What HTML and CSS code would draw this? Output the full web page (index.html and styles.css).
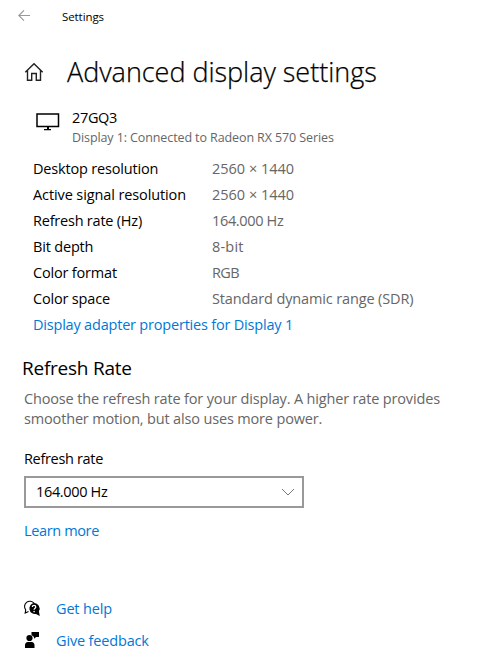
FILE: index.html
```html
<!DOCTYPE html>
<html lang="en">
<head>
<meta charset="utf-8">
<title>Settings</title>
<link rel="stylesheet" href="styles.css">
</head>
<body>
<header class="titlebar">
  <svg class="back" width="14" height="12" viewBox="0 0 14 12" fill="none" stroke="#999" stroke-width="1.100"><path d="M12 5.500H.8M6 .3.8 5.500 6 10.700"/></svg>
  <span>Settings</span>
</header>
<main>
  <div class="heading">
    <svg width="20" height="20" viewBox="0 0 20 20" fill="none" stroke="#222" stroke-width="1.4"><path d="M1.3 10.2 10 1.700l8.700 8.500M3.500 8.500v9.800h4.200v-6.800h4.600v6.800h4.200V8.500"/></svg>
    <h1>Advanced display settings</h1>
  </div>
  <section class="display">
    <svg width="24" height="18" viewBox="0 0 24 18"><path fill="none" stroke="#000" stroke-width="1.500" d="M1 1h21.500v12.500H1z"/><path d="M11 14h2v2h2v1.300H8V16h3z"/></svg>
    <div>
      <div class="name">27GQ3</div>
      <div class="connection">Display 1: Connected to Radeon RX 570 Series</div>
    </div>
  </section>
  <dl class="info">
    <dt>Desktop resolution</dt><dd class="res">2560 × 1440</dd>
    <dt class="signal">Active signal resolution</dt><dd class="res">2560 × 1440</dd>
    <dt class="rate">Refresh rate (Hz)</dt><dd class="hz">164.000 Hz</dd>
    <dt>Bit depth</dt><dd class="bits">8-bit</dd>
    <dt>Color format</dt><dd class="rgb">RGB</dd>
    <dt>Color space</dt><dd>Standard dynamic range (SDR)</dd>
  </dl>
  <a class="adapter">Display adapter properties for Display 1</a>
  <section class="refresh">
    <h2>Refresh Rate</h2>
    <p>Choose the refresh rate for your display. A higher rate provides<br>smoother motion, but also uses more power.</p>
    <div class="label">Refresh rate</div>
    <div class="select">
      <span class="hz">164.000 Hz</span>
      <svg width="14" height="8" viewBox="0 0 14 8" fill="none" stroke="#777"><path d="m1 1 6 6 6-6"/></svg>
    </div>
    <a class="learn">Learn more</a>
  </section>
  <nav class="support">
    <a><svg width="18" height="18" viewBox="0 0 18 18"><path d="M5.500 11.500 2.200 13l.5-3.200A5.200 5.200 0 1 1 11 3.200" fill="none" stroke="#000" stroke-width="1.100"/><path d="M11 3a5.500 5.500 0 0 1 4.900 8.200l.9 4.900-3.900-2.200A5.500 5.500 0 1 1 11 3z"/><path d="M9.300 7.100c0-2.200 3.500-2.200 3.500 0 0 1.300-1.700 1.200-1.700 2.700" fill="none" stroke="#fff" stroke-width="1.200"/><circle cx="11.100" cy="11.600" r=".8" fill="#fff"/></svg><span>Get help</span></a>
    <a><svg class="person" width="18" height="18" viewBox="0 0 18 18"><circle cx="6.500" cy="7" r="3.100"/><path d="M2 17v-2.500Q2 11 5 11h3.500q3 0 3 3.500V17zM8.500 1H16v5h-2.800l-2.200 1.800V6L8.500 4z"/></svg><span>Give feedback</span></a>
  </nav>
</main>
</body>
</html>
```
FILE: styles.css
```css
* { box-sizing: border-box; }
body {
  margin: 0;
  background: #fff;
  color: #000;
  font: 14.5px/20px "Open Sans", "Noto Sans", sans-serif;
  letter-spacing: -0.16px;
  white-space: nowrap;
}
svg { display: block; flex: none; }
h1, h2, p, dl, dd { margin: 0; font-weight: 400; }
a { color: #0078d7; }

.titlebar { display: flex; align-items: center; height: 32px; padding-left: 18px; font-size: 11.5px; letter-spacing: -0.08px; }
.titlebar span { margin-left: 30px; padding-top: 2px; }

.heading { display: flex; align-items: center; height: 40px; margin-top: 20px; padding-left: 24px; }
.heading h1 { margin-left: 23px; font-size: 27px; line-height: 40px; font-weight: 300; letter-spacing: -0.03px; -webkit-text-stroke: 0.25px #000; }

.display { display: flex; margin-top: 16px; padding-left: 36px; }
.display svg { margin: 5px 12px 0 0; }
.name { letter-spacing: -0.34px; }
.connection { color: #666; font-size: 12.5px; line-height: 20px; letter-spacing: -0.1px; }

.info { display: grid; grid-template-columns: 179px 1fr; grid-auto-rows: 26px; margin-top: 8px; padding-left: 33px; line-height: 26px; }
.info dt { letter-spacing: -0.18px; }
.info .signal { letter-spacing: -0.11px; }
.info .rate { letter-spacing: -0.22px; }
.info dd { color: #666; letter-spacing: -0.13px; }
.info .res { letter-spacing: -0.01px; }
.hz, .info .hz { letter-spacing: -0.34px; }
.info .bits { letter-spacing: 0.2px; }
.info .rgb { letter-spacing: -0.6px; }
.adapter { display: block; padding-left: 33px; line-height: 26px; letter-spacing: -0.2px; }

.refresh { padding: 17px 0 0 24px; }
.refresh h2 { margin-left: -2px; font-size: 19px; line-height: 26px; letter-spacing: -0.24px; }
.refresh p { margin-top: 8px; color: #666; }
.label { margin-top: 20px; letter-spacing: -0.33px; }
.select { display: flex; align-items: center; justify-content: space-between; width: 280px; height: 32px; margin-top: 7px; padding: 0 7px 0 10px; border: 2px solid #999; }
.learn { display: block; margin-top: 13px; letter-spacing: -0.36px; }

.support { display: grid; gap: 12px; margin-top: 58px; padding-left: 23px; }
.support a { display: flex; align-items: center; gap: 15px; }
.support svg { color: #000; }
.support .person { margin-top: -2px; }
```
